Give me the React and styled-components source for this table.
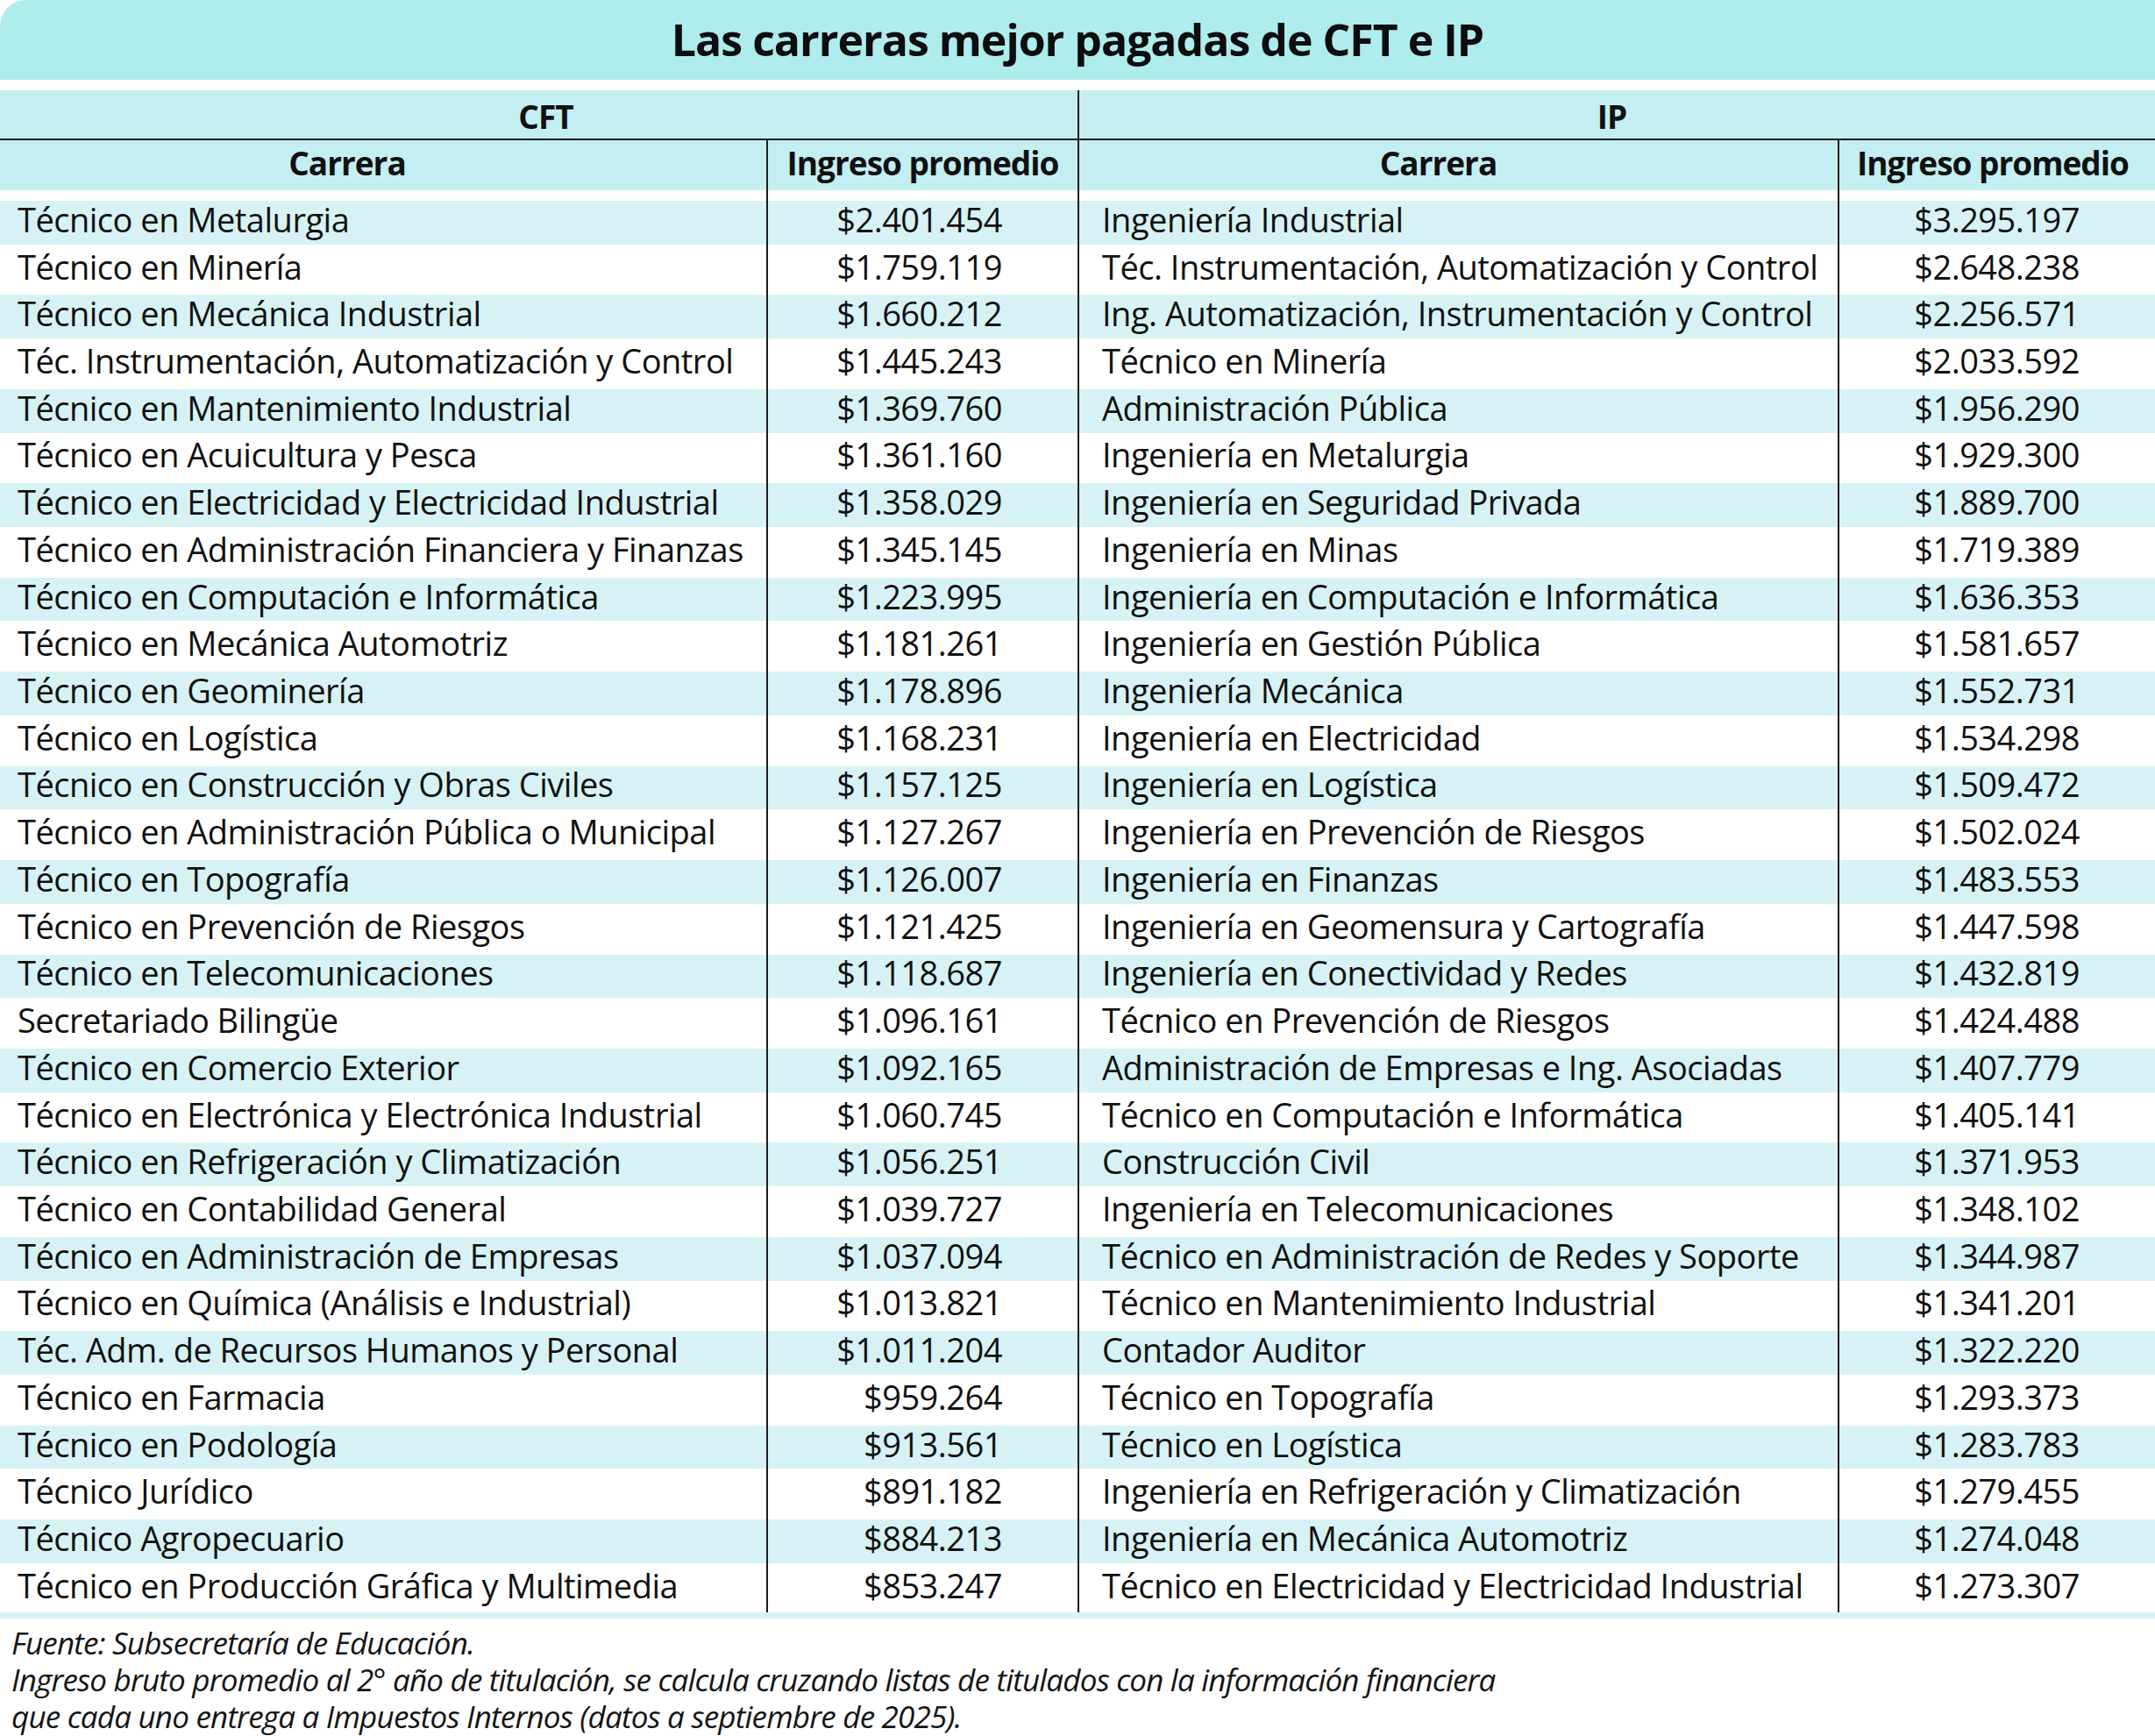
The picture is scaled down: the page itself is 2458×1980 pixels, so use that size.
import React from 'react'
import styled, { createGlobalStyle } from 'styled-components'

const GlobalStyle = createGlobalStyle`
  html, body {
    margin: 0;
    padding: 0;
    background: #ffffff;
  }
  body {
    font-family: 'Open Sans', 'Liberation Sans', sans-serif;
    color: #111111;
  }
`

const TITLE_BG = '#aeeced'
const HEAD_BG = '#c4eff2'
const TINT_BG = '#d7f2f4'
const LINE = '#1c1c1c'

const cft = [
  ['Técnico en Metalurgia', '$2.401.454'],
  ['Técnico en Minería', '$1.759.119'],
  ['Técnico en Mecánica Industrial', '$1.660.212'],
  ['Téc. Instrumentación, Automatización y Control', '$1.445.243'],
  ['Técnico en Mantenimiento Industrial', '$1.369.760'],
  ['Técnico en Acuicultura y Pesca', '$1.361.160'],
  ['Técnico en Electricidad y Electricidad Industrial', '$1.358.029'],
  ['Técnico en Administración Financiera y Finanzas', '$1.345.145'],
  ['Técnico en Computación e Informática', '$1.223.995'],
  ['Técnico en Mecánica Automotriz', '$1.181.261'],
  ['Técnico en Geominería', '$1.178.896'],
  ['Técnico en Logística', '$1.168.231'],
  ['Técnico en Construcción y Obras Civiles', '$1.157.125'],
  ['Técnico en Administración Pública o Municipal', '$1.127.267'],
  ['Técnico en Topografía', '$1.126.007'],
  ['Técnico en Prevención de Riesgos', '$1.121.425'],
  ['Técnico en Telecomunicaciones', '$1.118.687'],
  ['Secretariado Bilingüe', '$1.096.161'],
  ['Técnico en Comercio Exterior', '$1.092.165'],
  ['Técnico en Electrónica y Electrónica Industrial', '$1.060.745'],
  ['Técnico en Refrigeración y Climatización', '$1.056.251'],
  ['Técnico en Contabilidad General', '$1.039.727'],
  ['Técnico en Administración de Empresas', '$1.037.094'],
  ['Técnico en Química (Análisis e Industrial)', '$1.013.821'],
  ['Téc. Adm. de Recursos Humanos y Personal', '$1.011.204'],
  ['Técnico en Farmacia', '$959.264'],
  ['Técnico en Podología', '$913.561'],
  ['Técnico Jurídico', '$891.182'],
  ['Técnico Agropecuario', '$884.213'],
  ['Técnico en Producción Gráfica y Multimedia', '$853.247'],
]

const ip = [
  ['Ingeniería Industrial', '$3.295.197'],
  ['Téc. Instrumentación, Automatización y Control', '$2.648.238'],
  ['Ing. Automatización, Instrumentación y Control', '$2.256.571'],
  ['Técnico en Minería', '$2.033.592'],
  ['Administración Pública', '$1.956.290'],
  ['Ingeniería en Metalurgia', '$1.929.300'],
  ['Ingeniería en Seguridad Privada', '$1.889.700'],
  ['Ingeniería en Minas', '$1.719.389'],
  ['Ingeniería en Computación e Informática', '$1.636.353'],
  ['Ingeniería en Gestión Pública', '$1.581.657'],
  ['Ingeniería Mecánica', '$1.552.731'],
  ['Ingeniería en Electricidad', '$1.534.298'],
  ['Ingeniería en Logística', '$1.509.472'],
  ['Ingeniería en Prevención de Riesgos', '$1.502.024'],
  ['Ingeniería en Finanzas', '$1.483.553'],
  ['Ingeniería en Geomensura y Cartografía', '$1.447.598'],
  ['Ingeniería en Conectividad y Redes', '$1.432.819'],
  ['Técnico en Prevención de Riesgos', '$1.424.488'],
  ['Administración de Empresas e Ing. Asociadas', '$1.407.779'],
  ['Técnico en Computación e Informática', '$1.405.141'],
  ['Construcción Civil', '$1.371.953'],
  ['Ingeniería en Telecomunicaciones', '$1.348.102'],
  ['Técnico en Administración de Redes y Soporte', '$1.344.987'],
  ['Técnico en Mantenimiento Industrial', '$1.341.201'],
  ['Contador Auditor', '$1.322.220'],
  ['Técnico en Topografía', '$1.293.373'],
  ['Técnico en Logística', '$1.283.783'],
  ['Ingeniería en Refrigeración y Climatización', '$1.279.455'],
  ['Ingeniería en Mecánica Automotriz', '$1.274.048'],
  ['Técnico en Electricidad y Electricidad Industrial', '$1.273.307'],
]

const Page = styled.div`
  width: 2458px;
  display: flex;
  flex-direction: column;
`

const TitleBar = styled.h1`
  margin: 0 0 12px;
  height: 91px;
  background: ${TITLE_BG};
  border-top-left-radius: 30px;
  display: flex;
  align-items: center;
  justify-content: center;
  font-size: 50px;
  font-weight: 700;
  letter-spacing: -1px;
  color: #0d0d0d;
  padding-bottom: 2px;
  box-sizing: border-box;
`

const Table = styled.div`
  display: flex;
  flex-direction: column;
`

const Halves = styled.div`
  display: flex;
`

const Half = styled.section`
  flex: ${p => (p.$first ? '0 0 1229px' : '1 1 auto')};
  border-left: ${p => (p.$first ? 'none' : `2px solid ${LINE}`)};
  display: flex;
  flex-direction: column;
`

const GroupHead = styled.div`
  height: 57px;
  background: ${HEAD_BG};
  display: flex;
  align-items: center;
  justify-content: center;
  font-size: 37px;
  font-weight: 700;
  letter-spacing: -1px;
  border-bottom: 2px solid ${LINE};
  box-sizing: border-box;
  padding: 4px ${p => p.$right || 0}px 0 ${p => p.$left || 0}px;
`

const Grid = styled.div`
  display: grid;
  grid-template-columns: ${p => p.$cols};
  grid-template-rows: 100%;
`

const HeadRow = styled(Grid)`
  height: 57px;
  background: ${HEAD_BG};
`

const HeadCell = styled.div`
  display: flex;
  align-items: center;
  justify-content: center;
  font-size: 37px;
  font-weight: 700;
  letter-spacing: -1px;
  line-height: 1;
  padding: 0 ${p => p.$shift || 0}px 6px 0;
  border-left: ${p => (p.$divider ? `2px solid ${LINE}` : 'none')};
`

const Spacer = styled(Grid)`
  height: 10px;
`

const Row = styled(Grid)`
  height: 53.73px;
  background: ${p =>
    p.$tint
      ? `linear-gradient(#fff 0 2px, ${TINT_BG} 2px calc(100% - 2px), #fff calc(100% - 2px))`
      : '#fff'};
`

const Cell = styled.div`
  display: flex;
  align-items: center;
  justify-content: ${p => (p.$amount ? 'flex-end' : 'flex-start')};
  padding: 0 ${p => p.$padRight || 0}px 8px ${p => p.$padLeft || 0}px;
  font-size: 38px;
  line-height: 38px;
  letter-spacing: -0.5px;
  white-space: nowrap;
  color: #111;
  border-left: ${p => (p.$divider ? `2px solid ${LINE}` : 'none')};
`

const EmptyCell = styled.div`
  border-left: ${p => (p.$divider ? `2px solid ${LINE}` : 'none')};
`

const BottomStrip = styled.div`
  height: 7px;
  background: ${TINT_BG};
`

const Notes = styled.footer`
  margin-top: 7px;
  padding-left: 13px;
  font-size: 35px;
  font-style: italic;
  line-height: 42px;
  letter-spacing: -0.8px;
  color: #141414;
`

const Note = styled.p`
  margin: 0;
`

const TableHalf = ({ label, rows, cols, first, padLeft, headShift, groupLeft, groupRight, amountShift }) => (
  <Half $first={first}>
    <GroupHead $left={groupLeft} $right={groupRight}>{label}</GroupHead>
    <HeadRow $cols={cols}>
      <HeadCell $shift={headShift}>Carrera</HeadCell>
      <HeadCell $divider $shift={amountShift}>Ingreso promedio</HeadCell>
    </HeadRow>
    <Spacer $cols={cols}>
      <EmptyCell />
      <EmptyCell $divider />
    </Spacer>
    {rows.map(([name, amount], i) => (
      <Row key={name + i} $cols={cols} $tint={i % 2 === 0}>
        <Cell $padLeft={padLeft}>{name}</Cell>
        <Cell $amount $divider $padRight={86}>{amount}</Cell>
      </Row>
    ))}
  </Half>
)

export default function App() {
  return (
    <>
      <GlobalStyle />
      <Page>
        <TitleBar>Las carreras mejor pagadas de CFT e IP</TitleBar>
        <Table>
          <Halves>
            <TableHalf
              label="CFT"
              rows={cft}
              cols="874px 1fr"
              first
              padLeft={20}
              headShift={82}
              groupLeft={16}
              amountShift={0}
            />
            <TableHalf
              label="IP"
              rows={ip}
              cols="865px 1fr"
              padLeft={26}
              headShift={46}
              groupRight={12}
              amountShift={10}
            />
          </Halves>
          <BottomStrip />
        </Table>
        <Notes>
          <Note>Fuente: Subsecretaría de Educación.</Note>
          <Note>
            Ingreso bruto promedio al 2° año de titulación, se calcula cruzando listas de titulados con la información financiera
          </Note>
          <Note>que cada uno entrega a Impuestos Internos (datos a septiembre de 2025).</Note>
        </Notes>
      </Page>
    </>
  )
}
